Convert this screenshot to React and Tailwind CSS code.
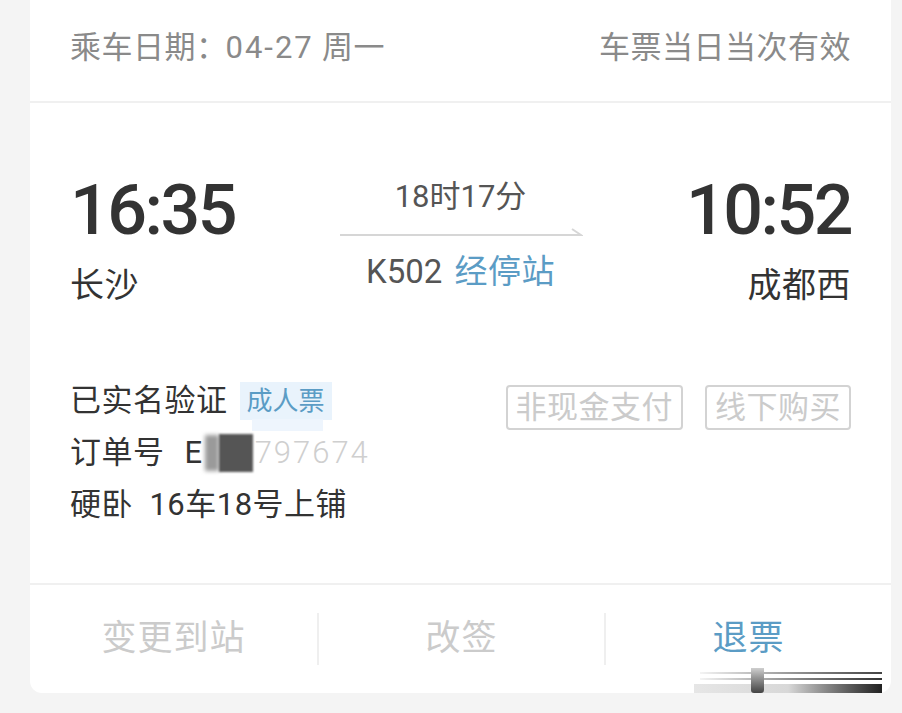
import React from 'react';

const cjk = { fontFamily: 'Roboto, "Noto Sans CJK SC", sans-serif' };

function TimeBlock({ time, station, align }) {
    return (
        <div className={`flex flex-col ${align === 'right' ? 'items-end' : 'items-start'}`}>
            <div className="text-[70px] leading-[70px] font-medium text-[#333] tracking-[-2.5px]">{time}</div>
            <div className="text-[34px] leading-[40px] text-[#333] mt-[20px] tracking-[0.5px]">{station}</div>
        </div>
    );
}

function Stamp({ children }) {
    return (
        <span className="h-[45px] px-[8px] flex items-center border-2 border-[#d3d3d3] rounded-[4px] text-[31px] text-[#cbcbcb] leading-none tracking-[0.5px]">
            {children}
        </span>
    );
}

export default function App() {
    return (
        <div className="w-full h-[713px] bg-[#f4f4f4] pl-[30px] pr-[11px] overflow-hidden" style={cjk}>
            <div className="relative h-[693px] bg-white rounded-b-[12px] flex flex-col">
                {/* date header */}
                <div className="h-[101px] px-[40px] pb-[4px] flex items-center justify-between text-[31px] text-[#8a8a8a] tracking-[0.5px]">
                    <span>乘车日期：<span className="ml-[-2px] tracking-[2px]">04-27</span> 周一</span>
                    <span>车票当日当次有效</span>
                </div>
                <div className="h-[2px] bg-[#f0f0f0]" />

                {/* journey */}
                <div className="px-[40px] pt-[72px] flex items-start justify-between">
                    <TimeBlock time="16:35" station="长沙" />
                    <div className="w-[242px] flex flex-col items-center">
                        <div className="text-[31px] leading-[38px] text-[#555] mt-[3px]">18时17分</div>
                        <svg width="244" height="12" viewBox="0 0 244 12" className="mt-[9px]">
                            <path d="M1 10 H242 L233 4" fill="none" stroke="#d6d6d6" strokeWidth="2" />
                        </svg>
                        <div className="text-[33px] leading-[40px] mt-[15px] flex gap-[12px]">
                            <span className="text-[#555]">K502</span>
                            <span className="text-[#5b9cc5] tracking-[0.5px]">经停站</span>
                        </div>
                    </div>
                    <TimeBlock time="10:52" station="成都西" align="right" />
                </div>

                {/* passenger info */}
                <div className="px-[40px] mt-[76px] flex justify-between items-start">
                    <div className="flex flex-col gap-[12px] text-[31px] leading-[40px] text-[#333] tracking-[0.5px]">
                        <div className="relative flex items-center">
                            <span>已实名验证</span>
                            <span className="ml-[12px] px-[7px] bg-[#e9f3fc] text-[#5b9cc5] text-[26px] leading-[38px] tracking-[0px]">成人票</span>
                            <span className="absolute left-[182px] top-[38px] w-[71px] h-[12px] bg-[#eef5fd]" />
                        </div>
                        <div className="flex items-center">
                            <span>订单号</span>
                            <span className="ml-[20px]">E</span>
                            <span className="w-[14px] h-[36px] bg-[#9a9a9a] blur-[2px] ml-[2px]" />
                            <span className="w-[34px] h-[38px] bg-[#555] blur-[1px]" />
                            <span className="ml-[2px] text-[#cfcfcf] font-light tracking-[2px]">797674</span>
                        </div>
                        <div>硬卧&nbsp;&nbsp;16车18号上铺</div>
                    </div>
                    <div className="flex gap-[22px] mt-[4px]">
                        <Stamp>非现金支付</Stamp>
                        <Stamp>线下购买</Stamp>
                    </div>
                </div>

                <div className="mt-auto h-[2px] bg-[#f0f0f0]" />
                <div className="h-[108px] grid grid-cols-3 items-center text-[35px] tracking-[1px]">
                    <div className="text-center text-[#cbcbcb]">变更到站</div>
                    <div className="text-center text-[#cbcbcb] border-l-2 border-[#efefef] leading-[52px]">改签</div>
                    <div className="text-center text-[#5b9cc5] border-l-2 border-[#efefef] leading-[52px]">退票</div>
                </div>

                {/* gesture artifact overlay */}
                <div className="absolute left-[662px] top-[668px] w-[190px] h-[25px]">
                    <div className="absolute left-[8px] top-[4px] w-[182px] h-[2px] bg-gradient-to-r from-[#f4f4f4] to-[#444]" />
                    <div className="absolute left-[8px] top-[10px] w-[182px] h-[2px] bg-gradient-to-r from-[#f4f4f4] to-[#333]" />
                    <div className="absolute left-[2px] top-[16px] w-[188px] h-[9px] bg-gradient-to-r from-[#e6e6e6] via-[#d8d8d8] to-[#222]" />
                    <div className="absolute left-[59px] top-0 w-[13px] h-[25px] rounded-b-[3px] bg-gradient-to-b from-[#cfcfcf] to-[#444]" />
                </div>
            </div>
        </div>
    );
}
